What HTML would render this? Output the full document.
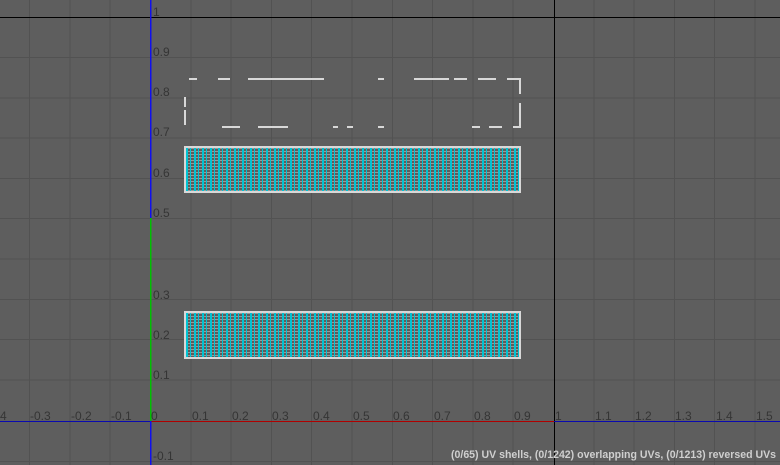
<!DOCTYPE html>
<html><head><style>
html,body{margin:0;padding:0;background:#5e5e5e;width:780px;height:465px;overflow:hidden}
svg{display:block}
text{font-family:"Liberation Sans",sans-serif;font-size:12px;fill:#353535}
</style></head><body>
<svg width="780" height="465" xmlns="http://www.w3.org/2000/svg" shape-rendering="crispEdges">
<defs>
<pattern id="m" x="185" y="147" width="8" height="3" patternUnits="userSpaceOnUse">
<rect width="8" height="3" fill="#5c5c5c"/>
<rect x="0" y="1" width="8" height="1" fill="#9a9a9a"/>
<rect x="1" y="0" width="2" height="3" fill="#00c4d4"/>
<rect x="5" y="0" width="1" height="3" fill="#00c4d4"/>
</pattern>
</defs>
<rect width="780" height="465" fill="#5e5e5e"/>
<g stroke="#525252" stroke-width="1">
<line x1="29.6" y1="0" x2="29.6" y2="465"/><line x1="69.9" y1="0" x2="69.9" y2="465"/><line x1="110.2" y1="0" x2="110.2" y2="465"/>
<line x1="190.8" y1="0" x2="190.8" y2="465"/><line x1="231.1" y1="0" x2="231.1" y2="465"/><line x1="271.4" y1="0" x2="271.4" y2="465"/>
<line x1="311.7" y1="0" x2="311.7" y2="465"/><line x1="352" y1="0" x2="352" y2="465"/><line x1="392.3" y1="0" x2="392.3" y2="465"/>
<line x1="432.6" y1="0" x2="432.6" y2="465"/><line x1="472.9" y1="0" x2="472.9" y2="465"/><line x1="513.2" y1="0" x2="513.2" y2="465"/>
<line x1="593.8" y1="0" x2="593.8" y2="465"/><line x1="634.1" y1="0" x2="634.1" y2="465"/><line x1="674.4" y1="0" x2="674.4" y2="465"/>
<line x1="714.7" y1="0" x2="714.7" y2="465"/><line x1="755" y1="0" x2="755" y2="465"/>
<line x1="0" y1="57.5" x2="780" y2="57.5"/><line x1="0" y1="97.8" x2="780" y2="97.8"/><line x1="0" y1="138.1" x2="780" y2="138.1"/>
<line x1="0" y1="178.4" x2="780" y2="178.4"/><line x1="0" y1="218.7" x2="780" y2="218.7"/><line x1="0" y1="259" x2="780" y2="259"/>
<line x1="0" y1="299.3" x2="780" y2="299.3"/><line x1="0" y1="339.6" x2="780" y2="339.6"/><line x1="0" y1="379.9" x2="780" y2="379.9"/>
<line x1="0" y1="461.5" x2="780" y2="461.5"/>
</g>
<line x1="0" y1="17.5" x2="780" y2="17.5" stroke="#000" stroke-width="1.2"/>
<line x1="554.5" y1="0" x2="554.5" y2="465" stroke="#000" stroke-width="1.2"/>
<line x1="0" y1="421.5" x2="780" y2="421.5" stroke="#0a0ab0" stroke-width="1.2"/>
<line x1="151" y1="421.5" x2="554" y2="421.5" stroke="#b00000" stroke-width="1.2"/>
<line x1="150.5" y1="0" x2="150.5" y2="218" stroke="#1010ee" stroke-width="1.5"/>
<line x1="150.5" y1="218" x2="150.5" y2="421" stroke="#00c000" stroke-width="1.5"/>
<line x1="150.5" y1="421" x2="150.5" y2="465" stroke="#1010ee" stroke-width="1.5"/>
<g>
<text x="153" y="16">1</text><text x="153" y="56">0.9</text><text x="153" y="96">0.8</text><text x="153" y="136">0.7</text>
<text x="153" y="177">0.6</text><text x="153" y="217">0.5</text><text x="153" y="299">0.3</text>
<text x="153" y="339">0.2</text><text x="153" y="379">0.1</text><text x="153" y="460">-0.1</text>
<text x="0" y="420">4</text><text x="30" y="420">-0.3</text><text x="71" y="420">-0.2</text><text x="111" y="420">-0.1</text>
<text x="151" y="420">0</text><text x="192" y="420">0.1</text><text x="232" y="420">0.2</text><text x="272" y="420">0.3</text>
<text x="313" y="420">0.4</text><text x="353" y="420">0.5</text><text x="393" y="420">0.6</text><text x="434" y="420">0.7</text>
<text x="474" y="420">0.8</text><text x="514" y="420">0.9</text><text x="555" y="420">1</text><text x="595" y="420">1.1</text>
<text x="635" y="420">1.2</text><text x="675" y="420">1.3</text><text x="716" y="420">1.4</text><text x="756" y="420">1.5</text>
</g>
<g fill="#d8d8d8">
<rect x="189" y="78" width="8" height="2"/><rect x="218" y="78" width="12" height="2"/><rect x="248" y="78" width="76" height="2"/>
<rect x="378" y="78" width="6" height="2"/><rect x="414" y="78" width="35" height="2"/><rect x="454" y="78" width="13" height="2"/>
<rect x="478" y="78" width="18" height="2"/><rect x="507" y="78" width="13" height="2"/>
<rect x="519" y="78" width="2" height="16"/><rect x="519" y="103" width="2" height="25"/>
<rect x="222" y="126" width="18" height="2"/><rect x="258" y="126" width="30" height="2"/><rect x="333" y="126" width="5" height="2"/>
<rect x="347" y="126" width="6" height="2"/><rect x="378" y="126" width="6" height="2"/><rect x="472" y="126" width="8" height="2"/>
<rect x="489" y="126" width="13" height="2"/><rect x="513" y="126" width="8" height="2"/>
<rect x="184" y="97" width="2" height="10"/><rect x="184" y="110" width="2" height="15"/>
</g>
<rect x="185" y="147" width="335" height="45" fill="url(#m)" stroke="#d8d8d8" stroke-width="2"/>
<rect x="185" y="312" width="335" height="46" fill="url(#m)" stroke="#d8d8d8" stroke-width="2"/>
<text x="451" y="458" textLength="325" lengthAdjust="spacingAndGlyphs" style="font-weight:bold;fill:#cfcfcf;font-size:11px">(0/65) UV shells, (0/1242) overlapping UVs, (0/1213) reversed UVs</text>
</svg>
</body></html>
